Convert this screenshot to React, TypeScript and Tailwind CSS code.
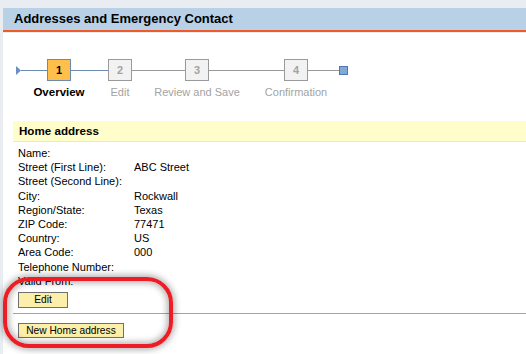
import React from "react";

type Step = { n: number; label: string; active?: boolean };

const steps: Step[] = [
  { n: 1, label: "Overview", active: true },
  { n: 2, label: "Edit" },
  { n: 3, label: "Review and Save" },
  { n: 4, label: "Confirmation" },
];

// gaps between the step boxes, in px
const lines = ["w-[26px]", "w-[37px]", "w-[53px]", "w-[75px]", "w-[31px]"];

const fields: [string, string][] = [
  ["Name:", ""],
  ["Street (First Line):", "ABC Street"],
  ["Street (Second Line):", ""],
  ["City:", "Rockwall"],
  ["Region/State:", "Texas"],
  ["ZIP Code:", "77471"],
  ["Country:", "US"],
  ["Area Code:", "000"],
  ["Telephone Number:", ""],
  ["Valid From:", ""],
];

const StepBox = ({ step }: { step: Step }) => (
  <div className="relative w-[24px] h-[22px]">
    <div
      className={
        step.active
          ? "w-full h-full flex items-center justify-center bg-[#ffbf4a] border border-[#6b8ab3] text-black text-[11px] font-bold"
          : "w-full h-full flex items-center justify-center bg-[#f2f2f2] border border-[#9a9a9a] text-[#a3a3a3] text-[11px] font-bold"
      }
    >
      {step.n}
    </div>
    <div
      className={
        step.active
          ? "absolute top-[27px] left-1/2 -translate-x-1/2 whitespace-nowrap text-[11.5px] leading-[13px] font-bold text-black"
          : "absolute top-[27px] left-1/2 -translate-x-1/2 whitespace-nowrap text-[11px] leading-[13px] text-[#a3a3a3]"
      }
    >
      {step.label}
    </div>
  </div>
);

export default function App() {
  return (
    <div
      className="relative w-[526px] h-[354px] overflow-hidden bg-white flex flex-col"
      style={{ fontFamily: '"Liberation Sans", Arial, sans-serif' }}
    >
      <div className="h-[8px] bg-[#e9edf1] shrink-0" />
      <div className="flex flex-1">
        <div className="w-[3px] bg-[#e9edf1]" />
        <div className="flex-1 flex flex-col">
          <div className="h-[22px] bg-[#b9d1e7] pl-[11px] text-[13px] leading-[22px] font-bold text-black">
            Addresses and Emergency Contact
          </div>
          <div className="h-[2px] bg-[#f05a28]" />
          <div className="h-[1px] bg-[#ececec]" />

          {/* stepper */}
          <div className="flex items-center mt-[26px] ml-[13px] h-[22px]">
            <svg width="5" height="9" viewBox="0 0 5 9">
              <polygon points="0,0 5,4.5 0,9" fill="#6d8fc0" />
            </svg>
            <div className={`${lines[0]} h-px bg-[#6b8ab3]`} />
            {steps.map((s, i) => (
              <React.Fragment key={s.n}>
                <StepBox step={s} />
                <div
                  className={
                    i === 0
                      ? `${lines[i + 1]} h-px bg-[#6b8ab3]`
                      : `${lines[i + 1]} h-px bg-[#9a9a9a]`
                  }
                />
              </React.Fragment>
            ))}
            <div className="w-[9px] h-[9px] bg-[#80a8d8] border border-[#4e79ad]" />
          </div>

          <div className="ml-[10px] mt-[40px]">
            <div className="h-[21px] bg-[#fffdc9] border-b border-[#e6e6e6] pl-[6px] text-[11.6px] leading-[20px] font-bold text-black">
              Home address
            </div>
            <div className="pl-[5px] mt-[4px] text-[11px] leading-[14.2px] text-black">
              {fields.map(([label, value]) => (
                <div key={label} className="flex">
                  <div className="w-[116px] shrink-0 whitespace-nowrap">{label}</div>
                  <div>{value}</div>
                </div>
              ))}
              <button className="block mt-[4px] w-[50px] h-[16px] bg-[#fcefa9] border border-[#707070] text-[10.2px] leading-[14px] text-black">
                Edit
              </button>
            </div>
            <div className="mt-[5px] h-px bg-[#8fa6c5]" />
            <div className="pl-[5px] mt-[9px]">
              <button className="block w-[106px] h-[15px] bg-[#fcefa9] border border-[#707070] text-[10.2px] leading-[13px] text-black">
                New Home address
              </button>
            </div>
          </div>
        </div>
      </div>

      {/* red annotation */}
      <div className="absolute left-[3px] top-[277px] w-[170px] h-[71px] rounded-[26px] border-4 border-[#ee1c24] shadow-[0_0_6px_2px_rgba(0,0,0,0.3),inset_0_0_6px_2px_rgba(0,0,0,0.3)]" />
    </div>
  );
}
